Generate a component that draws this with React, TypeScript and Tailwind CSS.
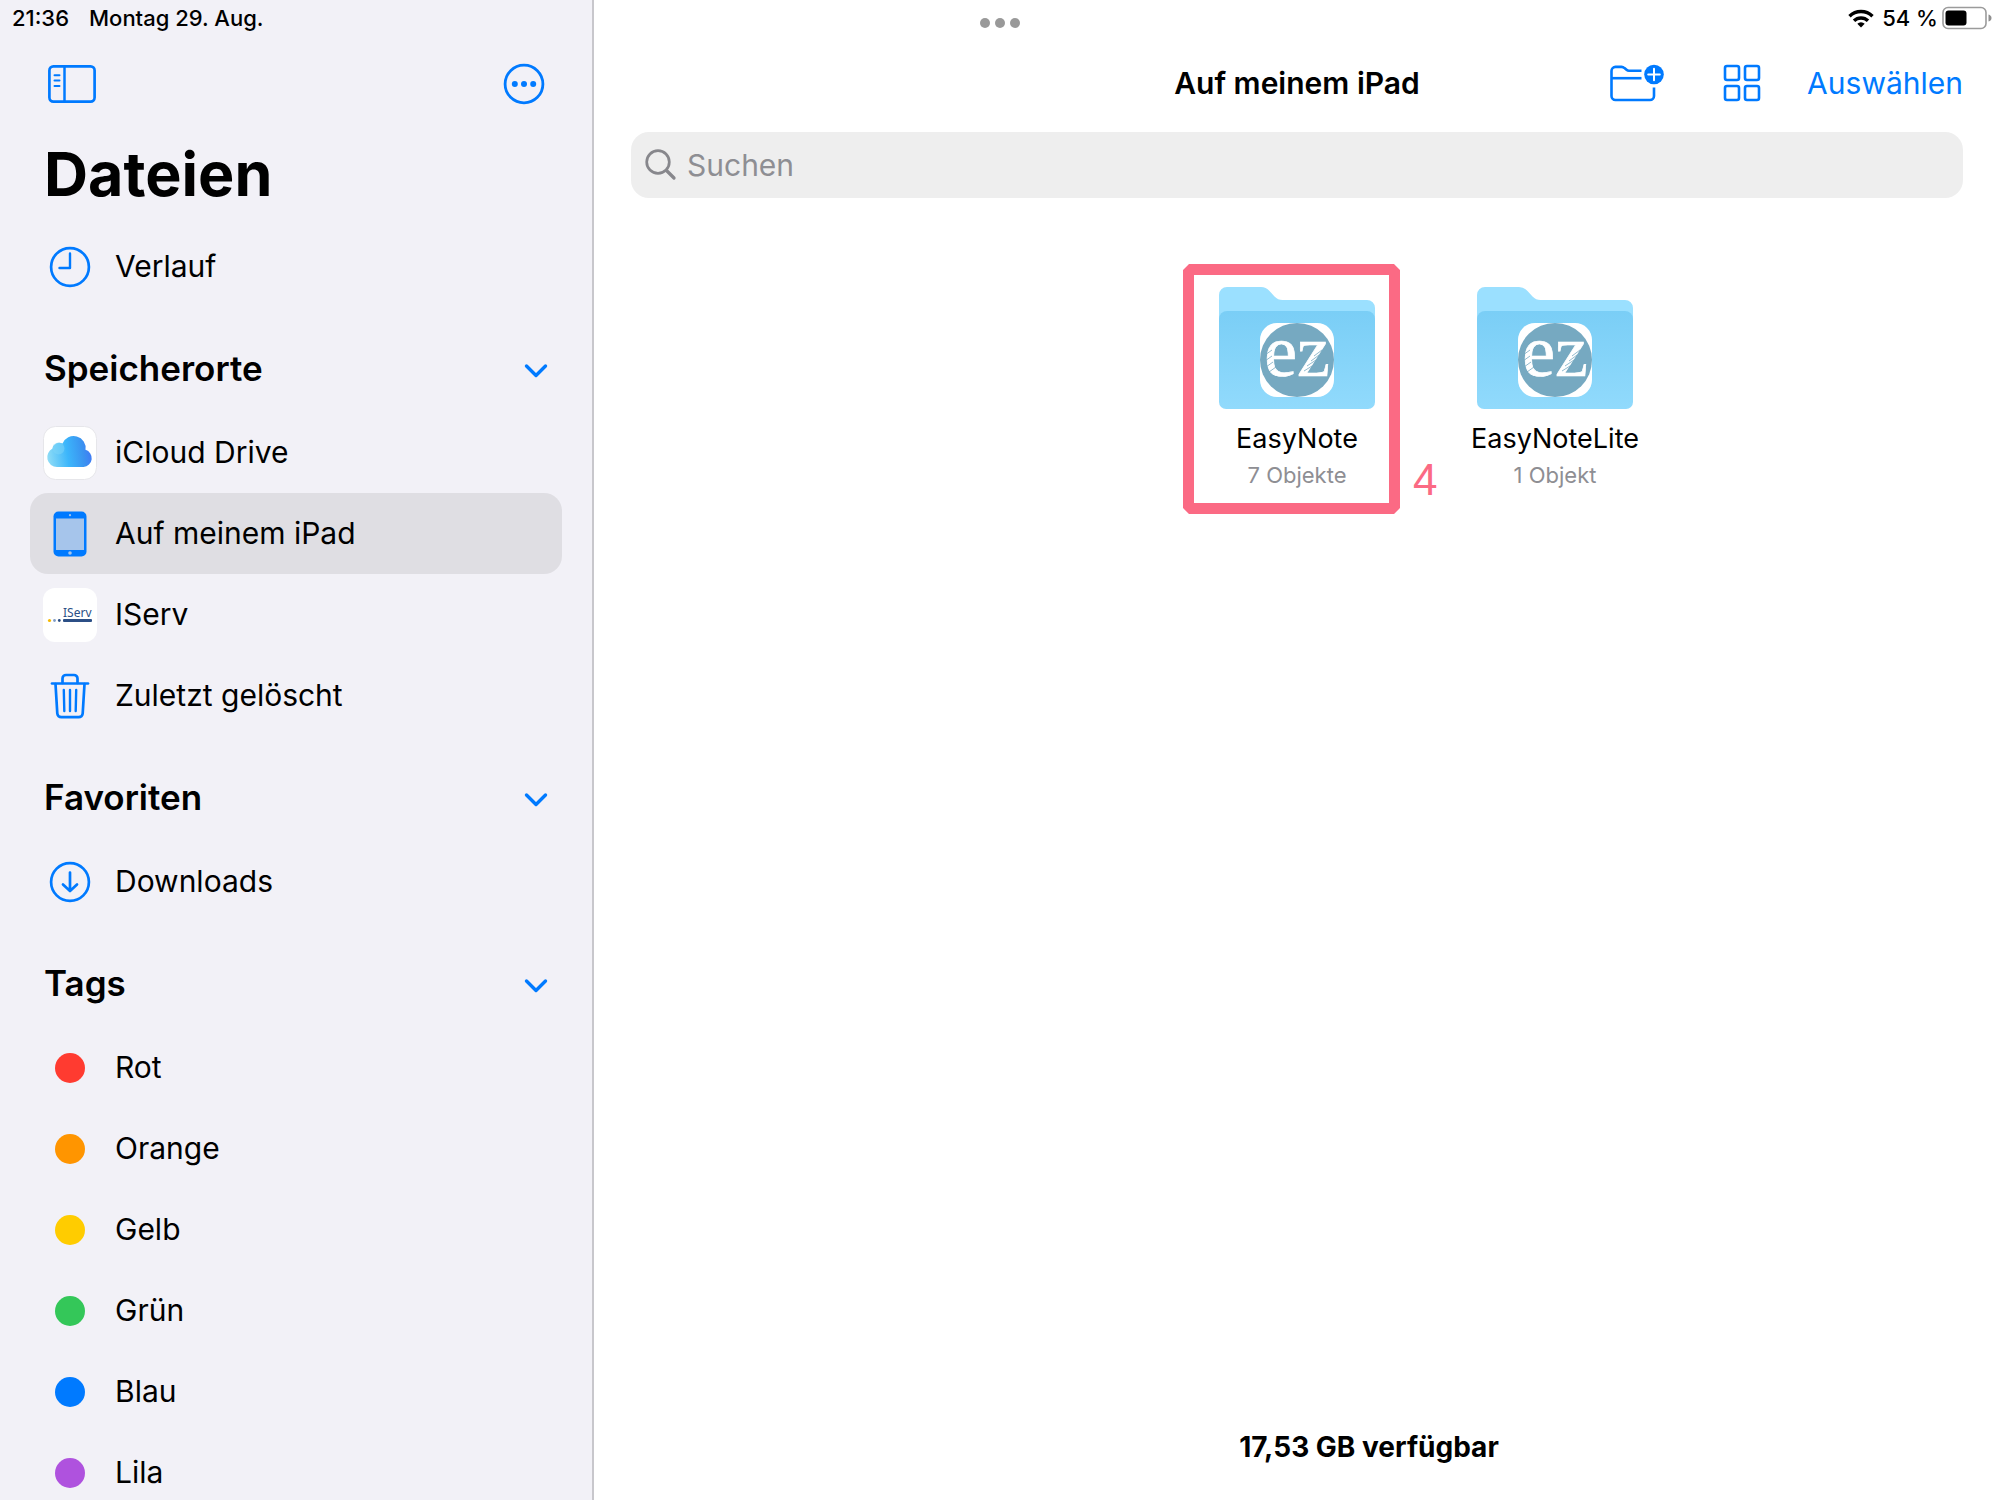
import { useState } from 'react';
import type { ReactNode } from 'react';

const IconSidebar = () => (
  <svg width="48" height="38" viewBox="0 0 48 38" fill="none" stroke="currentColor">
    <rect x="1.400" y="1.400" width="45.200" height="35.200" rx="4" strokeWidth="2.700" />
    <path d="M16.500 1.500v35" strokeWidth="2.500" />
    <path d="M6.500 10.300h5M6.500 15.600h5M6.500 21h5" strokeWidth="2" strokeLinecap="round" />
  </svg>
);

const IconMore = () => (
  <svg width="42" height="42" viewBox="0 0 42 42" fill="currentColor">
    <circle cx="21" cy="21" r="18.900" fill="none" stroke="currentColor" strokeWidth="2.800" />
    <circle cx="11.800" cy="21" r="3" />
    <circle cx="21" cy="21" r="3" />
    <circle cx="30.200" cy="21" r="3" />
  </svg>
);

const IconClock = () => (
  <svg width="42" height="42" viewBox="0 0 42 42" fill="none" stroke="currentColor" strokeWidth="2.700">
    <circle cx="21" cy="21" r="18.900" />
    <path d="M21 7.500V22H10.500" strokeWidth="2.400" strokeLinecap="round" strokeLinejoin="round" />
  </svg>
);

const IconDownload = () => (
  <svg width="42" height="42" viewBox="0 0 42 42" fill="none" stroke="currentColor" strokeWidth="2.700">
    <circle cx="21" cy="21" r="18.900" />
    <path d="M21 11.500v18M14 23.500l7 6.500 7-6.500" strokeLinecap="round" strokeLinejoin="round" />
  </svg>
);

const IconIpad = () => (
  <svg width="34" height="46" viewBox="0 0 34 46">
    <rect x="0.500" y="0.500" width="33" height="45" rx="5" fill="#007aff" />
    <rect x="3" y="7.500" width="28" height="31.500" fill="#a6c5eb" />
    <circle cx="17" cy="4.200" r="1.100" fill="#a6c5eb" />
    <circle cx="17" cy="42" r="1.800" fill="#a6c5eb" />
  </svg>
);

const IconTrash = () => (
  <svg width="40" height="46" viewBox="0 0 40 46" fill="none" stroke="currentColor" strokeWidth="2.700" strokeLinecap="round" strokeLinejoin="round">
    <path d="M2 10.500h36" />
    <path d="M12.500 10V5.500a3.500 3.500 0 0 1 3.500-3.500h8a3.500 3.500 0 0 1 3.500 3.500V10" />
    <path d="M5.500 11l1.800 29.500a4 4 0 0 0 4 3.700h17.400a4 4 0 0 0 4-3.700L34.500 11" />
    <path d="M13.800 17l.5 21M20 17v21M26.200 17l-.5 21" strokeWidth="2.400" />
  </svg>
);

const IconCloud = () => (
  <svg width="54" height="54" viewBox="0 0 54 54">
    <defs>
      <linearGradient id="cloud" x1="0" y1="0.6" x2="1" y2="0.5">
        <stop offset="0" stopColor="#8edcf6" />
        <stop offset="0.45" stopColor="#3cb6fb" />
        <stop offset="0.8" stopColor="#3a93f0" />
        <stop offset="1" stopColor="#4079f5" />
      </linearGradient>
    </defs>
    <rect x="0.500" y="0.500" width="53" height="53" rx="12" fill="#fff" stroke="#e6e6ea" />
    <path
      d="M14 41a9.800 9.800 0 0 1-4.500-18.500A7 7 0 0 1 19.500 17.500a12 12 0 0 1 23 6.300A8.800 8.800 0 0 1 40.500 41z"
      fill="url(#cloud)"
    />
    <circle cx="15.500" cy="22.500" r="6" fill="#7fd6f8" fillOpacity="0.5" />
  </svg>
);

const IconIServ = () => (
  <svg width="54" height="54" viewBox="0 0 54 54">
    <rect width="54" height="54" rx="12" fill="#fff" />
    <text x="20" y="29" fontSize="12" fill="#2c4f86" className="font-['Noto_Sans',sans-serif]">IServ</text>
    <rect x="20" y="31" width="29" height="3" rx="1" fill="#2c4f86" />
    <circle cx="6.500" cy="32.500" r="1.600" fill="#f6b800" />
    <circle cx="11.500" cy="32.500" r="1.400" fill="#7f9cc6" />
    <circle cx="16.300" cy="32.500" r="1.400" fill="#2c4f86" />
  </svg>
);

const IconChevron = () => (
  <svg width="24" height="16" viewBox="0 0 24 16" fill="none" stroke="currentColor" strokeWidth="3.400" strokeLinecap="round" strokeLinejoin="round">
    <path d="M2.500 3l9.500 9.500 9.500-9.500" />
  </svg>
);

const IconNewFolder = () => (
  <svg width="54" height="38" viewBox="0 0 54 38" fill="none" stroke="currentColor" strokeWidth="2.600">
    <path d="M31.500 6.800H19c-1 0-1.700-.3-2.500-1l-2-1.700c-1-.9-1.700-1.200-3-1.200H5.500a4 4 0 0 0-4 4V32a4 4 0 0 0 4 4H40a4 4 0 0 0 4-4V23.500" />
    <path d="M1.500 14.200h30" />
    <circle cx="44" cy="10.500" r="9.800" fill="currentColor" stroke="none" />
    <path d="M44 4.700v11.600M38.200 10.500h11.600" stroke="#fff" strokeWidth="2" strokeLinecap="round" />
  </svg>
);

const IconGrid = () => (
  <svg width="38" height="38" viewBox="0 0 38 38" fill="none" stroke="currentColor" strokeWidth="2.600">
    <rect x="2" y="2" width="14" height="14" rx="2" />
    <rect x="22" y="2" width="14" height="14" rx="2" />
    <rect x="2" y="22" width="14" height="14" rx="2" />
    <rect x="22" y="22" width="14" height="14" rx="2" />
  </svg>
);

const IconSearch = () => (
  <svg width="32" height="32" viewBox="0 0 32 32" fill="none" stroke="#87878c" strokeLinecap="round">
    <circle cx="13" cy="13" r="11.300" strokeWidth="2.700" />
    <path d="M21.500 21.500l7.500 7.500" strokeWidth="3.300" />
  </svg>
);

const IconWifi = () => (
  <svg width="26" height="19" viewBox="0 0 26 19" fill="none" stroke="#000" strokeWidth="3.400">
    <path d="M1.500 7.200a16.500 16.500 0 0 1 23 0" />
    <path d="M6 11.800a10 10 0 0 1 14 0" />
    <path d="M13 18.500l-3.700-3.800a5.300 5.300 0 0 1 7.400 0z" fill="#000" stroke="none" />
  </svg>
);

const IconBattery = () => (
  <svg width="50" height="24" viewBox="0 0 50 24">
    <rect x="1" y="1.500" width="43" height="21" rx="5" fill="#fff" stroke="#9b9b9b" strokeWidth="1.600" />
    <rect x="3.500" y="4.500" width="21" height="15" rx="3" fill="#000" />
    <path d="M46.500 8.500q3 1 3 3.500t-3 3.500z" fill="#8f8f8f" />
  </svg>
);

const FolderPicture = () => (
  <svg width="156" height="122" viewBox="0 0 156 122">
    <defs>
      <linearGradient id="front" x1="0" y1="0" x2="0" y2="1">
        <stop offset="0" stopColor="#7acef6" />
        <stop offset="1" stopColor="#91dafc" />
      </linearGradient>
    </defs>
    <path d="M0 8a8 8 0 0 1 8-8h34q5 0 8.500 4l5 5.500q3.500 3.500 8 3.500H148a8 8 0 0 1 8 8v30H0z" fill="#9be0ff" />
    <path d="M0 32a8 8 0 0 1 8-8h140a8 8 0 0 1 8 8v83a7 7 0 0 1-7 7H7a7 7 0 0 1-7-7z" fill="url(#front)" />
    <rect x="41" y="36" width="74" height="74" rx="17" fill="#fff" />
    <circle cx="78" cy="73" r="37" fill="#76a9c1" />
    <text
      x="78"
      y="89"
      textAnchor="middle"
      fontSize="74"
      fill="#fff"
      stroke="#fff"
      strokeWidth="0.700"
      className="font-['Liberation_Serif',serif]"
    >
      ez
    </text>
    {/* chalk scratches over the letters */}
    <path
      d="M46 68l7-5M46 74l7-5M47 80l7-5M50 85l7-5M85 84l8-5M88 79l9-6M92 74l8-6M95 69l8-6"
      stroke="#76a9c1"
      strokeWidth="0.800"
    />
  </svg>
);

const locations = [
  { id: 'icloud', label: 'iCloud Drive', icon: <IconCloud /> },
  { id: 'ipad', label: 'Auf meinem iPad', icon: <IconIpad /> },
  { id: 'iserv', label: 'IServ', icon: <IconIServ /> },
  { id: 'trash', label: 'Zuletzt gelöscht', icon: <IconTrash /> },
];

const tags = [
  { id: 'red', label: 'Rot', color: 'bg-[#ff3b30]' },
  { id: 'orange', label: 'Orange', color: 'bg-[#ff9500]' },
  { id: 'yellow', label: 'Gelb', color: 'bg-[#ffcc00]' },
  { id: 'green', label: 'Grün', color: 'bg-[#34c759]' },
  { id: 'blue', label: 'Blau', color: 'bg-[#007aff]' },
  { id: 'purple', label: 'Lila', color: 'bg-[#af52de]' },
];

const folders = [
  { id: 'easynote', name: 'EasyNote', info: '7 Objekte', marked: true },
  { id: 'easynotelite', name: 'EasyNoteLite', info: '1 Objekt', marked: false },
];

function SidebarRow({ icon, label, active, onClick }: { icon: ReactNode; label: string; active?: boolean; onClick?: () => void }) {
  return (
    <button
      type="button"
      onClick={onClick}
      className={`flex h-[81px] w-full shrink-0 items-center gap-[18px] rounded-[18px] pl-[13px] text-left text-[30px] ${
        active ? 'bg-[#dfdee3]' : ''
      }`}
    >
      <span className="flex w-[54px] justify-center text-[#007aff]">{icon}</span>
      {label}
    </button>
  );
}

function SidebarSection({ title, children }: { title: string; children: ReactNode }) {
  const [open, setOpen] = useState(true);

  return (
    <section>
      <h2 className="h-[105px] pt-[18px]">
        <button
          type="button"
          aria-expanded={open}
          onClick={() => setOpen(!open)}
          className="flex h-full w-full items-center justify-between px-[14px] text-[35px] font-semibold"
        >
          {title}
          <span className="pt-1 text-[#007aff]"><IconChevron /></span>
        </button>
      </h2>
      {open && children}
    </section>
  );
}

function StatusBar() {
  return (
    <header className="pointer-events-none z-10 col-start-1 row-start-1 grid h-9 grid-cols-3 items-center self-start px-2 text-[22px] font-medium">
      <div className="flex gap-5 pl-1">
        <span>21:36</span>
        <span>Montag 29. Aug.</span>
      </div>
      <div className="flex justify-center gap-[5px] pt-[10px]">
        <span className="size-[10px] rounded-full bg-[#999]" />
        <span className="size-[10px] rounded-full bg-[#999]" />
        <span className="size-[10px] rounded-full bg-[#999]" />
      </div>
      <div className="flex items-center justify-end">
        <IconWifi />
        <span className="pr-1 pl-2">54 %</span>
        <IconBattery />
      </div>
    </header>
  );
}

export default function App() {
  const [selected, setSelected] = useState('ipad');
  const [query, setQuery] = useState('');

  return (
    <div className="grid h-screen overflow-hidden bg-white font-['Inter',sans-serif] text-black">
      <StatusBar />

      <div className="col-start-1 row-start-1 flex min-h-0">
        <aside className="flex w-[594px] shrink-0 flex-col overflow-hidden border-r-2 border-[#c8c7cc] bg-[#f2f1f7] px-[30px] pt-[58px]">
          <div className="flex h-[52px] shrink-0 items-center justify-between pr-[17px] pl-[18px] text-[#007aff]">
            <button type="button" aria-label="Seitenleiste"><IconSidebar /></button>
            <button type="button" aria-label="Mehr"><IconMore /></button>
          </div>
          <h1 className="flex h-[116px] shrink-0 items-center pt-[14px] pl-[14px] text-[61px] font-bold">Dateien</h1>

          <nav>
            <SidebarRow icon={<IconClock />} label="Verlauf" />

            <SidebarSection title="Speicherorte">
              {locations.map((item) => (
                <SidebarRow
                  key={item.id}
                  icon={item.icon}
                  label={item.label}
                  active={selected === item.id}
                  onClick={() => setSelected(item.id)}
                />
              ))}
            </SidebarSection>

            <SidebarSection title="Favoriten">
              <SidebarRow icon={<IconDownload />} label="Downloads" />
            </SidebarSection>

            <SidebarSection title="Tags">
              {tags.map((tag) => (
                <SidebarRow
                  key={tag.id}
                  label={tag.label}
                  icon={<span className={`size-[30px] rounded-full ${tag.color}`} />}
                />
              ))}
            </SidebarSection>
          </nav>
        </aside>

        <main className="flex min-w-0 flex-1 flex-col px-[37px] pt-[57px]">
          <div className="grid h-[52px] grid-cols-[1fr_auto_1fr] items-center">
            <h2 className="col-start-2 text-[30px] font-semibold">Auf meinem iPad</h2>
            <div className="flex items-center justify-end text-[#007aff]">
              <button type="button" aria-label="Neuer Ordner"><IconNewFolder /></button>
              <button type="button" aria-label="Darstellung" className="mr-[46px] ml-[59px]"><IconGrid /></button>
              <button type="button" className="text-[30px]">Auswählen</button>
            </div>
          </div>

          <label className="mt-[23px] flex h-[66px] items-center gap-[10px] rounded-[18px] bg-[#eeeeee] px-[14px]">
            <IconSearch />
            <input
              type="text"
              aria-label="Suchen"
              placeholder="Suchen"
              value={query}
              onChange={(e) => setQuery(e.target.value)}
              className="min-w-0 flex-1 bg-transparent text-[30px] outline-none placeholder:text-[#8e8e93]"
            />
          </label>

          <div className="grid grid-cols-[repeat(5,258px)] justify-center pt-[66px]">
            {folders.map((folder) => (
              <div key={folder.id} className="relative flex justify-center pt-[23px] first:col-start-3">
                <button type="button" className="flex flex-col items-center">
                  <FolderPicture />
                  <span className="mt-3 text-[27px] leading-9">{folder.name}</span>
                  <span className="mt-[2px] text-[22px] leading-8 text-[#8e8e93]">{folder.info}</span>
                </button>
                {folder.marked && (
                  <div className="pointer-events-none absolute top-0 left-[15px] flex items-end text-[#fb6a84]">
                    <svg width="217" height="250" viewBox="0 0 217 250" fill="currentColor">
                      <path
                        fillRule="evenodd"
                        d="M6 0H211L217 6V244L211 250H6L0 244V6zM11 11V239H206V11z"
                      />
                    </svg>
                    <span className="mb-[9px] ml-[13px] font-['Liberation_Sans',sans-serif] text-[44px] leading-[50px]">4</span>
                  </div>
                )}
              </div>
            ))}
          </div>

          <footer className="mt-auto pb-9 pl-36 text-center text-[28px] leading-[34px] font-bold">
            17,53 GB verfügbar
          </footer>
        </main>
      </div>
    </div>
  );
}
